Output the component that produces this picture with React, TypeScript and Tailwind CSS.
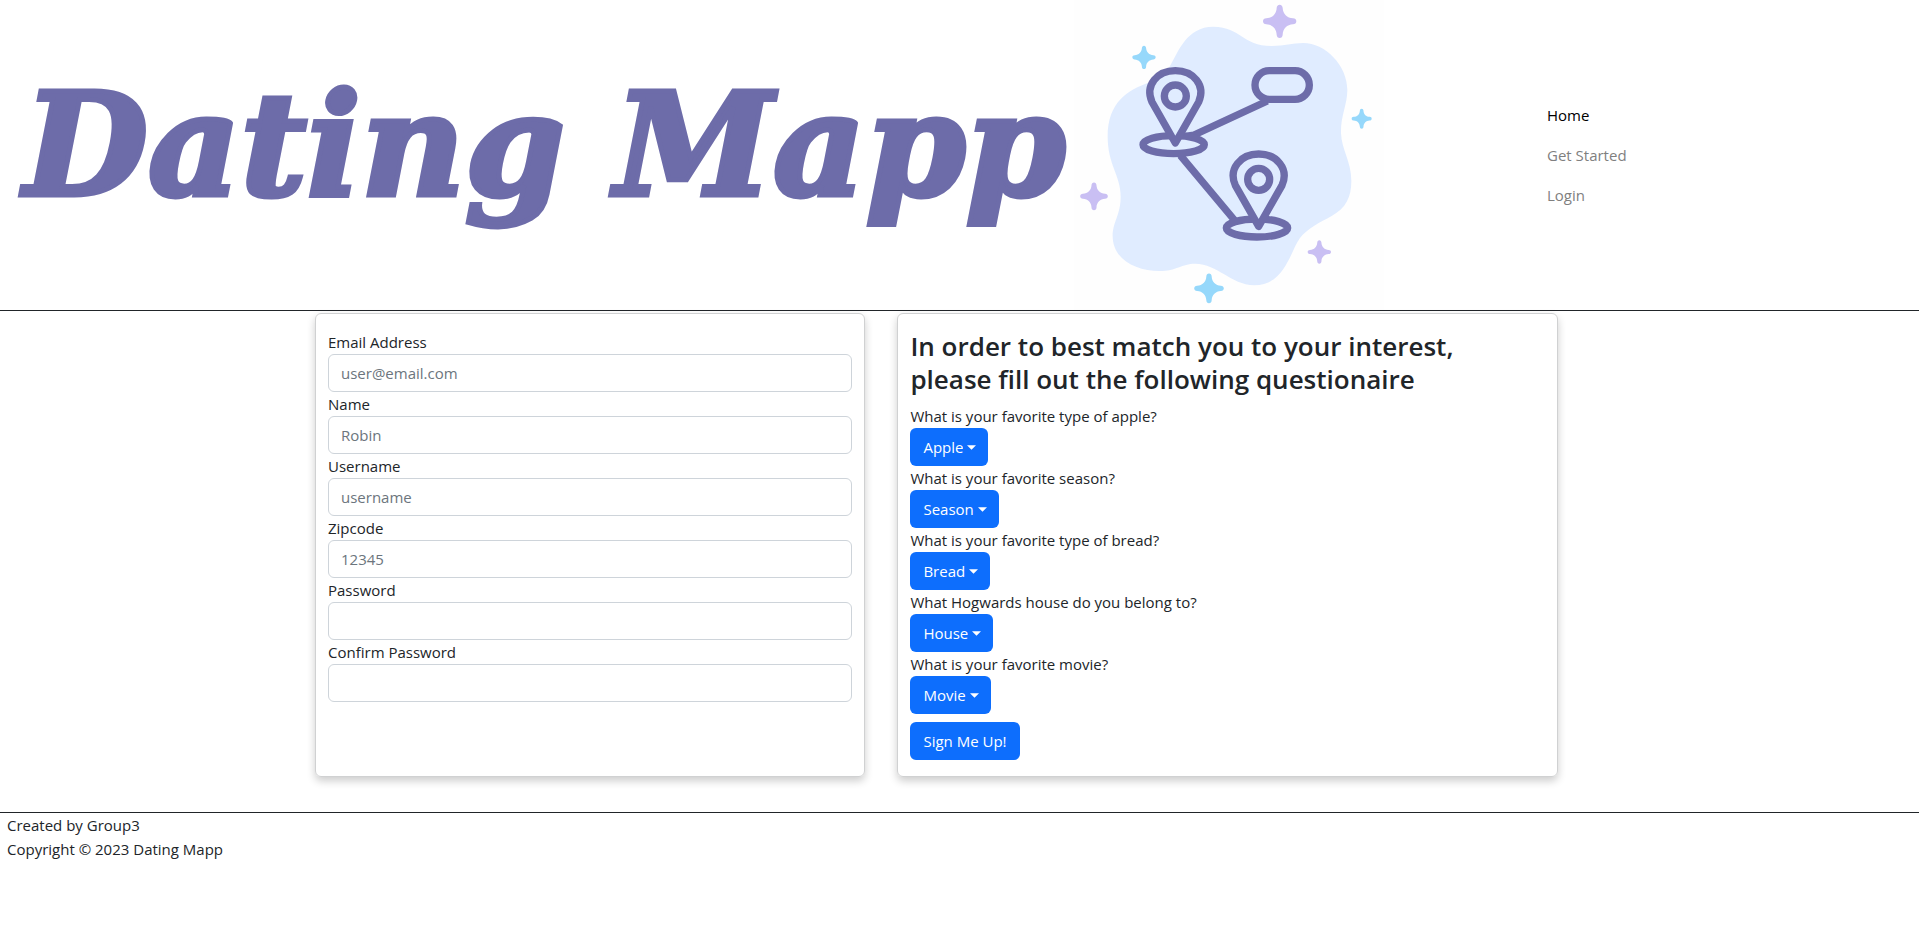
import { useState } from 'react';

const STAR =
  'M0-50C5-50 9-46 9-40C10-22 22-10 40-9C46-9 50-5 50 0C50 5 46 9 40 9C22 10 10 22 9 40C9 46 5 50 0 50C-5 50-9 46-9 40C-10 22-22 10-40 9C-46 9-50 5-50 0C-50-5-46-9-40-9C-22-10-10-22-9-40C-9-46-5-50 0-50Z';

const stars = [
  { x: 629, y: 64, s: 1, fill: '#c9bff3' },
  { x: 222, y: 172, s: 0.7, fill: '#96d8fb' },
  { x: 875, y: 356, s: 0.6, fill: '#96d8fb' },
  { x: 72, y: 589, s: 0.83, fill: '#c9bff3' },
  { x: 748, y: 756, s: 0.7, fill: '#c9bff3' },
  { x: 417, y: 865, s: 0.89, fill: '#96d8fb' },
];

function Pin({ x, y }: { x: number; y: number }) {
  return (
    <g transform={`translate(${x} ${y})`}>
      <ellipse cx="-5" cy="146" rx="92" ry="27" fill="#e0ecff" />
      <path d="M0 141L-70 18C-92-32-54-76 0-76C54-76 92-32 70 18Z" fill="#e0ecff" />
      <circle cx="0" cy="0" r="33" />
    </g>
  );
}

function MapLogo() {
  return (
    <svg viewBox="12 0 930 930" className="h-auto w-[310px] shrink-0 bg-[#fefefe]" role="img" aria-label="Map route">
      <path
        fill="#e0ecff"
        d="M430 80C515 82 515 137 605 138C645 138 665 129 700 129C765 129 832 195 832 270C832 315 812 345 813 400C815 450 844 485 844 542C844 592 828 623 785 648C750 667 710 687 690 714C660 755 645 855 553 856C480 853 445 792 375 791C335 791 320 813 268 813C200 813 128 780 128 708C128 665 152 645 152 590C152 525 113 495 113 410C113 310 170 270 240 247C275 235 285 225 300 198C325 155 350 80 430 80Z"
      />
      {stars.map((star) => (
        <path key={star.y} d={STAR} fill={star.fill} transform={`translate(${star.x} ${star.y}) scale(${star.s})`} />
      ))}
      <g fill="none" stroke="#6d6ca9" strokeWidth="22" strokeLinejoin="round">
        <rect x="555" y="212" width="163" height="86" rx="43" />
        <path d="M592 303L372 405L340 410M331 466L493 660" />
        <Pin x={316} y={288} />
        <Pin x={566} y={538} />
      </g>
    </svg>
  );
}

const links = [
  { label: 'Home', active: true },
  { label: 'Get Started', active: false },
  { label: 'Login', active: false },
];

const fields = [
  { id: 'email', label: 'Email Address', type: 'email', placeholder: 'user@email.com' },
  { id: 'name', label: 'Name', type: 'text', placeholder: 'Robin' },
  { id: 'username', label: 'Username', type: 'text', placeholder: 'username' },
  { id: 'zipcode', label: 'Zipcode', type: 'text', placeholder: '12345' },
  { id: 'password', label: 'Password', type: 'password', placeholder: '' },
  { id: 'confirm', label: 'Confirm Password', type: 'password', placeholder: '' },
];

const questions = [
  { id: 'apple', label: 'What is your favorite type of apple?', options: ['Apple', 'Fuji', 'Gala'] },
  { id: 'season', label: 'What is your favorite season?', options: ['Season', 'Spring', 'Fall'] },
  { id: 'bread', label: 'What is your favorite type of bread?', options: ['Bread', 'Rye', 'White'] },
  { id: 'house', label: 'What Hogwards house do you belong to?', options: ['House', 'Gryffindor', 'Slytherin'] },
  { id: 'movie', label: 'What is your favorite movie?', options: ['Movie', 'Comedy', 'Drama'] },
];

function Question({ id, label, options }: { id: string; label: string; options: string[] }) {
  const [value, setValue] = useState(options[0]);
  return (
    <div className="flex flex-col items-start">
      <label htmlFor={id}>{label}</label>
      <div className="relative">
        <select
          id={id}
          value={value}
          onChange={(e) => setValue(e.target.value)}
          className="field-sizing-content block h-[38px] cursor-pointer appearance-none rounded-md bg-[#0d6efd] pr-[25px] pl-[13px] text-white"
        >
          {options.map((option) => (
            <option key={option}>{option}</option>
          ))}
        </select>
        <svg viewBox="0 0 10 5" className="pointer-events-none absolute top-[17px] right-3 h-[5px] w-[9px]" aria-hidden="true">
          <path d="M0 0H10L5 5Z" fill="#fff" />
        </svg>
      </div>
    </div>
  );
}

export default function App() {
  return (
    <div className="font-['Open_Sans','Noto_Sans',sans-serif] text-[15px] leading-6 text-[#212529]">
      <header className="flex flex-wrap items-center border-b border-[#212529]">
        <div className="flex flex-1 items-center">
          <h1 className="w-[1074px] pb-5 pl-6 font-['DejaVu_Serif',serif] text-[143px] leading-none font-bold whitespace-nowrap text-[#6d6ca9] italic [-webkit-text-stroke:5px_#6d6ca9] [stroke-linejoin:round]">
            Dating Mapp
          </h1>
          <MapLogo />
        </div>
        <nav className="flex w-[372px] flex-col items-start">
          {links.map((link) => (
            <a key={link.label} href="#" className={link.active ? 'py-2 text-black' : 'py-2 text-[#7f7f7f]'}>
              {link.label}
            </a>
          ))}
        </nav>
      </header>

      <main className="mx-auto max-w-[1321px] pt-0.5 pb-[35px]">
        <form className="flex" onSubmit={(e) => e.preventDefault()}>
          <section className="mx-4 w-5/12 rounded-md border border-[#d0d1d2] px-3 py-4 shadow-[0_4px_8px_rgba(0,0,0,0.2)]">
            {fields.map((field) => (
              <div key={field.id}>
                <label htmlFor={field.id} className="block">
                  {field.label}
                </label>
                <input
                  id={field.id}
                  type={field.type}
                  placeholder={field.placeholder}
                  className="block h-[38px] w-full rounded-md border border-[#ced4da] px-3 placeholder:text-[#6c757d]"
                />
              </div>
            ))}
          </section>
          <section className="mx-4 w-1/2 rounded-md border border-[#d0d1d2] px-3 py-4 shadow-[0_4px_8px_rgba(0,0,0,0.2)]">
            <h2 className="mb-2 max-w-[600px] text-[26px] leading-[33px] font-semibold">
              In order to best match you to your interest, please fill out the following questionaire
            </h2>
            {questions.map((question) => (
              <Question key={question.id} {...question} />
            ))}
            <button type="submit" className="mt-2 block h-[38px] cursor-pointer rounded-md bg-[#0d6efd] px-[13px] text-white">
              Sign Me Up!
            </button>
          </section>
        </form>
      </main>

      <footer className="border-t border-[#212529] px-[7px]">
        <p>Created by Group3</p>
        <p>Copyright © 2023 Dating Mapp</p>
      </footer>
    </div>
  );
}
